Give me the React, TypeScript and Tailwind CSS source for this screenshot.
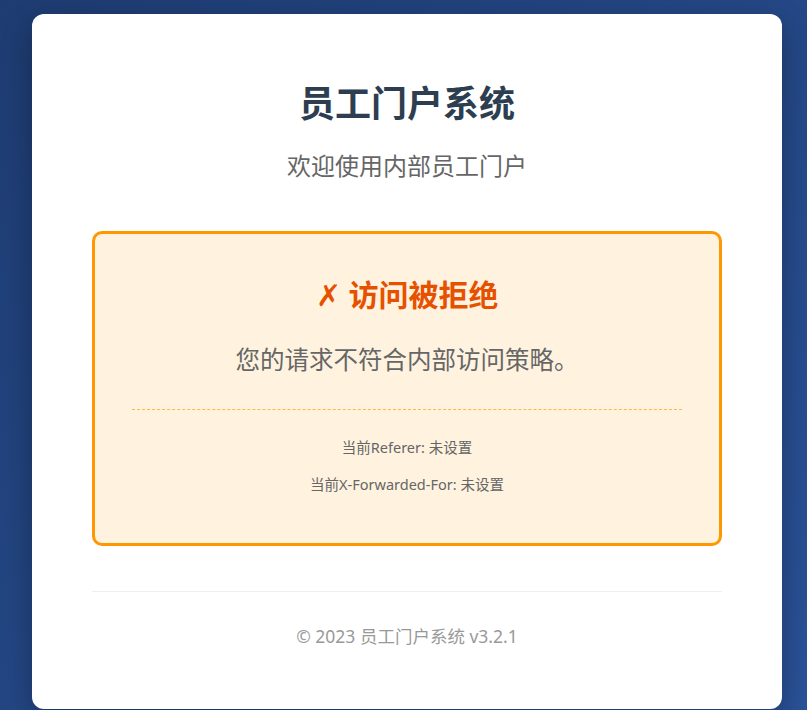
// App.tsx

const App = () => {
  return (
    <div
      className="min-h-screen overflow-hidden bg-[linear-gradient(135deg,#1e3c72_0%,#2a5298_100%)] pt-[14px] pl-[32px] font-['Noto_Sans','Noto_Sans_CJK_SC',sans-serif]"
    >
      <div className="w-[750px] rounded-[12px] bg-white px-[60px] pt-[69px] pb-[62px] shadow-[0_10px_30px_rgba(0,0,0,0.3)]">
        <h1 className="text-center text-[36px] leading-[42px] font-bold text-[#2c3e50]">员工门户系统</h1>
        <p className="mt-[26px] text-center text-[24px] leading-[30px] text-[#666]">欢迎使用内部员工门户</p>

        <div className="mt-[50px] rounded-[10px] border-[3px] border-[#ff9800] bg-[#fff3e0] px-[37px] pt-[43px] pb-[49px] text-center">
          <h2 className="text-[30px] leading-[36px] font-bold text-[#e65100]">
            <span className="font-normal">✗</span> 访问被拒绝
          </h2>
          <p className="mt-[32px] text-[24.5px] leading-[30px] text-[#666]">您的请求不符合内部访问策略。</p>
          <div className="mt-[34px] border-t border-dashed border-[#ffb74d]" />
          <p className="mt-[27px] text-[14.5px] leading-[20px] text-[#666]">当前Referer: 未设置</p>
          <p className="mt-[17px] text-[14.5px] leading-[20px] text-[#666]">当前X-Forwarded-For: 未设置</p>
        </div>

        <div className="mt-[45px] border-t border-[#eee] pt-[33px]">
          <p className="text-center text-[17.5px] leading-[22px] text-[#999]">© 2023 员工门户系统 v3.2.1</p>
        </div>
      </div>
    </div>
  )
}

export default App
